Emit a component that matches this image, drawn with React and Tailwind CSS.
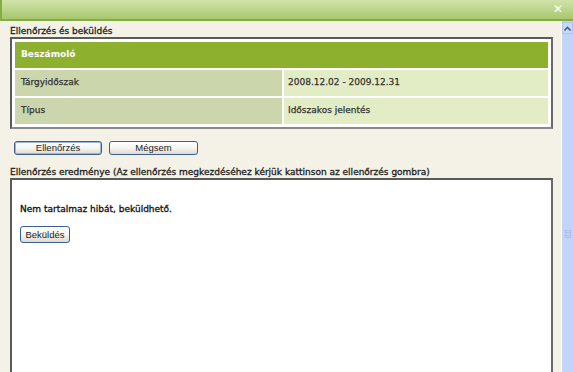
import React from 'react'

const tahoma = { fontFamily: '"DejaVu Sans", Verdana, sans-serif' }

function Btn({ children, className = '' }) {
  return (
    <button
      className={`rounded-[3px] border border-[#3d5f8f] bg-gradient-to-b from-white via-[#f6f5f0] to-[#dcdad0] text-[9.5px] leading-none text-[#222] ${className}`}
      style={{ fontFamily: '"Liberation Sans", Arial, sans-serif' }}
    >
      {children}
    </button>
  )
}

export default function App() {
  return (
    <div className="w-[573px] h-[372px] overflow-hidden bg-[#f4f2e6] flex flex-col" style={tahoma}>
      <div className="h-[21px] shrink-0 relative border-b-2 border-[#86ad45] border-l-2 bg-gradient-to-b from-[#cfe3a8] via-[#bdd68e] to-[#a8c66d]">
        <span className="absolute right-[10px] top-[3px] text-white font-bold text-[12px] leading-none">✕</span>
      </div>
      <div className="flex flex-1 min-h-0">
        <div className="flex-1 pl-[10px] pr-[8px] pt-[4px]">
          <div className="text-[9px] leading-[12px] text-[#222] [-webkit-text-stroke:0.3px_#222]">Ellenőrzés és beküldés</div>
          <div className="border-2 border-[#5a5a5a] border-b-[#8a8a8a] border-r-[#6a6a6a] bg-white p-[3px]">
            <div className="grid grid-cols-[267px_1fr] gap-[2px] text-[9px] text-[#333] [-webkit-text-stroke:0.25px_#333]">
              <div className="col-span-2 h-[26px] bg-[#8db12f] text-white font-bold flex items-center pl-[6px] [-webkit-text-stroke:0px]">Beszámoló</div>
              <div className="h-[26px] bg-[#ccd6ad] flex items-center pl-[6px]">Tárgyidőszak</div>
              <div className="h-[26px] bg-[#e2edc6] flex items-center pl-[4px]">2008.12.02 - 2009.12.31</div>
              <div className="h-[26px] bg-[#ccd6ad] flex items-center pl-[6px]">Típus</div>
              <div className="h-[26px] bg-[#e2edc6] flex items-center pl-[4px]">Időszakos jelentés</div>
            </div>
          </div>
          <div className="flex gap-[7px] mt-[12px] pl-[4px]">
            <Btn className="w-[88px] h-[14px] border-[#1f3f78] shadow-[inset_0_0_0_1px_#9ab6e0]">Ellenőrzés</Btn>
            <Btn className="w-[89px] h-[14px]">Mégsem</Btn>
          </div>
          <div className="mt-[11px] text-[9px] leading-[12px] text-[#222] [-webkit-text-stroke:0.3px_#222]">
            Ellenőrzés eredménye (Az ellenőrzés megkezdéséhez kérjük kattinson az ellenőrzés gombra)
          </div>
          <div className="h-[220px] border-2 border-[#5a5a5a] border-r-[#6a6a6a] bg-white pl-[8px] pt-[23px]">
            <div className="text-[9px] leading-[12px] text-[#111] [-webkit-text-stroke:0.3px_#111]">Nem tartalmaz hibát, beküldhető.</div>
            <Btn className="mt-[11px] w-[50px] h-[17px]">Beküldés</Btn>
          </div>
        </div>
        <div className="w-[12px] shrink-0 bg-[#c3d4fb] border-l border-white flex flex-col">
          <div className="h-[12px] mt-[1px] bg-[#c7d8fd] border border-[#b0c4f0] flex items-center justify-center">
            <svg width="7" height="5" viewBox="0 0 7 5"><path d="M0.5 4.5 L3.5 1.5 L6.5 4.5" stroke="#4d6185" strokeWidth="1.6" fill="none" /></svg>
          </div>
          <div className="flex-1 flex flex-col items-center pt-[196px]">
            <div className="w-[6px] h-[8px] border border-[#aabff0] flex flex-col justify-around">
              <div className="h-px bg-[#aabff0]" />
              <div className="h-px bg-[#aabff0]" />
            </div>
          </div>
        </div>
      </div>
    </div>
  )
}
